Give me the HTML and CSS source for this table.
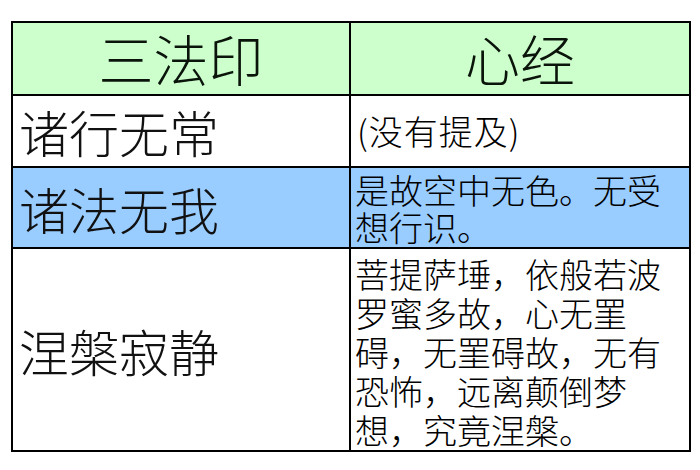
FILE: index.html
```html
<!DOCTYPE html>
<html lang="zh-CN">
<head>
<meta charset="utf-8">
<title>三法印 心经</title>
<link rel="stylesheet" href="styles.css">
</head>
<body>
<div class="sheet">
  <div class="cell head">三法印</div>
  <div class="cell head">心经</div>
  <div class="cell name r1">诸行无常</div>
  <div class="cell text r1">(没有提及)</div>
  <div class="cell name r2 blue">诸法无我</div>
  <div class="cell text r2 blue">是故空中无色。无受想行识。</div>
  <div class="cell name r3">涅槃寂静</div>
  <div class="cell text r3 top">菩提萨埵，依般若波罗蜜多故，心无罣碍，无罣碍故，无有恐怖，远离颠倒梦想，究竟涅槃。</div>
</div>
</body>
</html>
```

FILE: styles.css
```css
html, body {
  margin: 0;
  padding: 0;
  background: #ffffff;
}
body {
  padding: 21px 0 0 11px;
  font-family: "Noto Sans CJK SC", "Noto Sans", sans-serif;
  color: #000;
}
.sheet {
  display: grid;
  grid-template-columns: 336px 338px;
  grid-template-rows: 71px 70px 79px 201px;
  gap: 2px;
  padding: 2px;
  width: 676px;
  background: #000;
}
.cell {
  background: #fff;
  display: flex;
  align-items: center;
  box-sizing: border-box;
}
.head {
  background: #ccffcc;
  justify-content: center;
  font-size: 55px;
  line-height: 60px;
  font-weight: 300;
  color: #0a140a;
  padding-bottom: 4px;
}
.name {
  font-size: 50px;
  line-height: 56px;
  font-weight: 300;
  padding-left: 6px;
  color: #111;
}
.text {
  font-size: 34px;
  line-height: 38px;
  font-weight: 300;
  padding-left: 4px;
  padding-right: 0;
  color: #000;
}
.r1.text {
  padding-left: 6px;
  letter-spacing: 1px;
}
.blue {
  background: #99ccff;
}
.r2.text {
  line-height: 37px;
}
.r3.text {
  line-height: 39px;
  align-items: flex-start;
  padding-top: 5px;
}
```
